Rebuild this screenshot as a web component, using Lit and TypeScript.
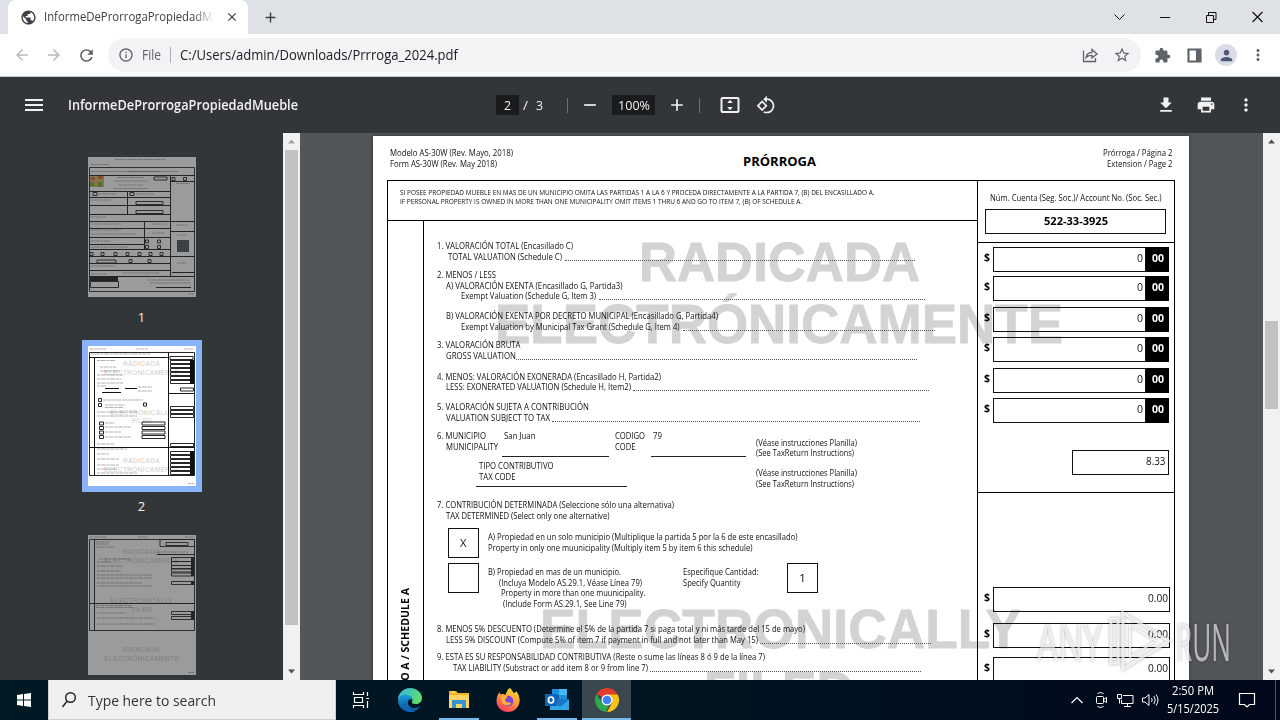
import { LitElement, css, html, svg, nothing } from "lit";
import type { TemplateResult } from "lit";
import { customElement, property } from "lit/decorators.js";
import { classMap } from "lit/directives/class-map.js";
import { styleMap } from "lit/directives/style-map.js";

// One run of text squeezed or stretched to a known width, as a PDF text layer does.
@customElement("text-run")
export class TextRun extends LitElement {
  static styles = css`
    :host {
      display: block;
      flex: none;
      white-space: pre;
    }
    span {
      display: inline-block;
      transform-origin: 0 50%;
    }
  `;

  @property({ type: String })
  text = "";

  @property({ type: Number })
  w = 0;

  protected override updated(): void {
    const span = this.renderRoot.querySelector("span");
    if (!span || !this.w) {
      return;
    }
    span.style.transform = "none";
    const natural = span.getBoundingClientRect().width;
    span.style.transform = `scaleX(${this.w / natural})`;
  }

  render() {
    return html`<div style=${styleMap({ width: `${this.w}px` })}><span>${this.text}</span></div>`;
  }
}

const run = (text: string, w: number, cls = "") =>
  html`<text-run class=${cls} .text=${text} .w=${w}></text-run>`;

const material = (d: string, size = 24) =>
  html`<svg class="icon" width=${size} height=${size} viewBox="0 0 24 24" fill="currentColor"><path d=${d}></path></svg>`;

const ICON = {
  globe: "M12 2C6.48 2 2 6.48 2 12s4.48 10 10 10 10-4.48 10-10S17.52 2 12 2zm-1 17.93c-3.95-.49-7-3.85-7-7.93 0-.62.08-1.21.21-1.79L9 15v1c0 1.1.9 2 2 2v1.93zm6.9-2.54c-.26-.81-1-1.39-1.9-1.39h-1v-3c0-.55-.45-1-1-1H8v-2h2c.55 0 1-.45 1-1V7h2c1.1 0 2-.9 2-2v-.41c2.93 1.19 5 4.06 5 7.41 0 2.08-.8 3.97-2.1 5.39z",
  close: "M19 6.41L17.59 5 12 10.59 6.41 5 5 6.41 10.59 12 5 17.59 6.41 19 12 13.41 17.59 19 19 17.59 13.41 12z",
  add: "M19 13h-6v6h-2v-6H5v-2h6V5h2v6h6v2z",
  remove: "M19 13H5v-2h14v2z",
  back: "M20 11H7.83l5.59-5.59L12 4l-8 8 8 8 1.41-1.41L7.83 13H20v-2z",
  forward: "M12 4l-1.41 1.41L16.17 11H4v2h12.17l-5.58 5.59L12 20l8-8z",
  reload: "M17.65 6.35C16.2 4.9 14.21 4 12 4c-4.42 0-7.99 3.58-7.99 8s3.57 8 7.99 8c3.73 0 6.84-2.55 7.73-6h-2.08c-.82 2.33-3.04 4-5.65 4-3.31 0-6-2.69-6-6s2.69-6 6-6c1.66 0 3.14.69 4.22 1.78L13 11h7V4l-2.35 2.35z",
  info: "M11 7h2v2h-2zm0 4h2v6h-2zm1-9C6.48 2 2 6.48 2 12s4.48 10 10 10 10-4.48 10-10S17.52 2 12 2zm0 18c-4.41 0-8-3.59-8-8s3.59-8 8-8 8 3.59 8 8-3.59 8-8 8z",
  star: "M22 9.24l-7.19-.62L12 2 9.19 8.63 2 9.24l5.46 4.73L5.82 21 12 17.27 18.18 21l-1.63-7.03L22 9.24zM12 15.4l-3.76 2.27 1-4.28-3.32-2.88 4.38-.38L12 6.1l1.71 4.04 4.38.38-3.32 2.88 1 4.28L12 15.4z",
  puzzle: "M20.5 11H19V7c0-1.1-.9-2-2-2h-4V3.5C13 2.12 11.88 1 10.5 1S8 2.12 8 3.5V5H4c-1.1 0-1.99.9-1.99 2v3.8H3.5c1.49 0 2.7 1.21 2.7 2.7s-1.21 2.7-2.7 2.7H2V20c0 1.1.9 2 2 2h3.8v-1.5c0-1.49 1.21-2.7 2.7-2.7s2.7 1.21 2.7 2.7V22H17c1.1 0 2-.9 2-2v-4h1.5c1.38 0 2.5-1.12 2.5-2.5S21.88 11 20.5 11z",
  person: "M12 12c2.21 0 4-1.79 4-4s-1.79-4-4-4-4 1.79-4 4 1.79 4 4 4zm0 2c-2.67 0-8 1.34-8 4v2h16v-2c0-2.66-5.33-4-8-4z",
  more: "M12 8c1.1 0 2-.9 2-2s-.9-2-2-2-2 .9-2 2 .9 2 2 2zm0 2c-1.1 0-2 .9-2 2s.9 2 2 2 2-.9 2-2-.9-2-2-2zm0 6c-1.1 0-2 .9-2 2s.9 2 2 2 2-.9 2-2-.9-2-2-2z",
  panel: "M2 2h20v20H2zM5 5v14h9V5z",
  menu: "M3 18h18v-2H3v2zm0-5h18v-2H3v2zm0-7v2h18V6H3z",
  rotate: "M7.34 6.41L.86 12.9l6.49 6.48 6.49-6.48-6.5-6.49zM3.69 12.9l3.66-3.66L11 12.9l-3.66 3.66-3.65-3.66zm15.67-6.26C17.61 4.88 15.3 4 13 4V.76L8.76 5 13 9.24V6c1.79 0 3.58.68 4.95 2.05 2.73 2.73 2.73 7.17 0 9.9C16.58 19.32 14.79 20 13 20c-.97 0-1.94-.21-2.84-.61l-1.49 1.49C10.02 21.62 11.51 22 13 22c2.3 0 4.61-.88 6.36-2.64 3.52-3.51 3.52-9.21 0-12.72z",
  download: "M19 9h-4V3H9v6H5l7 7 7-7zM5 18v2h14v-2H5z",
  print: "M19 8H5c-1.66 0-3 1.34-3 3v6h4v4h12v-4h4v-6c0-1.66-1.34-3-3-3zm-3 11H8v-5h8v5zm3-7c-.55 0-1-.45-1-1s.45-1 1-1 1 .45 1 1-.45 1-1 1zm-1-9H6v4h12V3z",
};

@customElement("browser-bar")
export class BrowserBar extends LitElement {
  static styles = css`
    :host {
      display: block;
      height: 77px;
      box-sizing: border-box;
      background: #fff;
      border-bottom: 1px solid #c4cacd;
      font: 12px/16px "Open Sans", "Noto Sans", sans-serif;
      color: #3c4043;
    }
    .icon {
      display: block;
      flex: none;
    }
    .strip {
      display: flex;
      height: 34px;
      background: #dee1e6;
      align-items: center;
      padding-left: 8px;
    }
    .tab {
      display: flex;
      align-items: center;
      box-sizing: border-box;
      width: 240px;
      height: 34px;
      padding: 0 9px 0 12px;
      background: #fff;
      border-radius: 8px 8px 0 0;
    }
    .caption {
      width: 170px;
      margin: 0 11px 0 7px;
      overflow: hidden;
      mask-image: linear-gradient(90deg, #000 88%, transparent);
    }
    .plus {
      margin-left: 14px;
      color: #3c4043;
    }
    .window {
      display: flex;
      align-items: center;
      gap: 30px;
      margin-left: auto;
      padding-right: 15px;
      color: #111;
    }
    .bar {
      display: flex;
      align-items: center;
      height: 42px;
      padding: 0 13px;
      color: #5f6368;
    }
    .nav {
      display: flex;
      gap: 14px;
      width: 95px;
    }
    .nav .off {
      color: #bababa;
    }
    .omni {
      display: flex;
      flex: 1;
      align-items: center;
      height: 34px;
      padding: 0 10px;
      background: #f1f3f4;
      border-radius: 17px;
      font-size: 14px;
    }
    .scheme {
      margin-left: 8px;
    }
    .rule {
      width: 1px;
      height: 16px;
      margin: 0 9px 0 9px;
      background: #a9adb1;
    }
    .url {
      color: #202124;
      margin-right: auto;
    }
    .omni .star {
      margin-left: 14px;
    }
    .actions {
      display: flex;
      align-items: center;
      gap: 12px;
      padding-left: 13px;
    }
    .puzzle {
      margin-right: 3px;
    }
    .avatar {
      display: grid;
      place-items: center;
      width: 22px;
      height: 22px;
      border-radius: 50%;
      background: #dadce8;
      color: #50587a;
    }
  `;

  render() {
    return html`
      <div class="strip">
        <div class="tab">
          ${material(ICON.globe, 17)}
          <div class="caption">${run("InformeDeProrrogaPropiedadMueble", 198)}</div>
          ${material(ICON.close, 14)}
        </div>
        <div class="plus">${material(ICON.add, 17)}</div>
        <div class="window">
          <svg class="icon" width="16" height="12" fill="none" stroke="currentColor"><path d="M3.5 3.5l5 5 5-5"></path></svg>
          <svg class="icon" width="16" height="12" fill="none" stroke="currentColor"><path d="M3 6.5h10"></path></svg>
          <svg class="icon" width="16" height="12" fill="none" stroke="currentColor"><path d="M3.5 4.5h7v7h-7zM5.5 4V1.5h7.5v7h-2"></path></svg>
          <svg class="icon" width="16" height="12" fill="none" stroke="currentColor" stroke-width="1.2"><path d="M3.5 1l10 10m0-10l-10 10"></path></svg>
        </div>
      </div>
      <div class="bar">
        <div class="nav">
          <div class="off">${material(ICON.back, 18)}</div>
          <div class="off">${material(ICON.forward, 18)}</div>
          ${material(ICON.reload, 19)}
        </div>
        <div class="omni">
          ${material(ICON.info, 16)}
          ${run("File", 19, "scheme")}
          <div class="rule"></div>
          ${run("C:/Users/admin/Downloads/Prrroga_2024.pdf", 278, "url")}
          <svg class="icon" width="18" height="18" viewBox="0 0 18 18" fill="none" stroke="currentColor" stroke-width="1.3">
            <path d="M2.5 4.5v11h12V12"></path>
            <path d="M5 11.5c.5-3.5 2.5-5 6-5.2V3.500L16 8l-5 4V9.300C8.500 9.200 6.500 9.800 5 11.500z"></path>
          </svg>
          <div class="star">${material(ICON.star, 18)}</div>
        </div>
        <div class="actions">
          <div class="puzzle">${material(ICON.puzzle, 17)}</div>
          ${material(ICON.panel, 17)}
          <div class="avatar">${material(ICON.person, 17)}</div>
          ${material(ICON.more, 18)}
        </div>
      </div>
    `;
  }
}

@customElement("viewer-toolbar")
export class ViewerToolbar extends LitElement {
  static styles = css`
    :host {
      display: flex;
      align-items: center;
      height: 56px;
      padding: 0 22px;
      background: #323639;
      color: #f1f1f1;
      font: 13.5px/20px "Open Sans", "Noto Sans", sans-serif;
    }
    .icon {
      display: block;
      flex: none;
    }
    .name {
      width: 394px;
      margin-left: 22px;
      font-weight: 600;
    }
    .center {
      display: flex;
      align-items: center;
      margin-left: 34px;
      font-size: 13px;
    }
    .field {
      display: grid;
      place-items: center;
      width: 23px;
      height: 20px;
      background: #191b1c;
    }
    .field.zoom {
      width: 43px;
      margin: 0 12px 0 12px;
    }
    .of {
      display: flex;
      width: 20px;
      gap: 8px;
      margin-left: 4px;
    }
    .rule {
      width: 1px;
      height: 15px;
      margin-left: 24px;
      background: #6d7173;
    }
    .zoom ~ .rule {
      margin-left: 12px;
    }
    .center .rule + .icon {
      margin-left: 12px;
    }
    .center .rotate {
      margin-left: 8px;
    }
    .actions {
      display: flex;
      gap: 20px;
      margin-left: auto;
      padding-right: 2px;
    }
  `;

  render() {
    return html`
      ${material(ICON.menu, 24)}
      <div class="name">${run("InformeDeProrrogaPropiedadMueble", 230)}</div>
      <div class="center">
        <div class="field">${run("2", 7)}</div>
        <div class="of">${run("/", 5)}${run("3", 7)}</div>
        <div class="rule"></div>
        ${material(ICON.remove, 20)}
        <div class="field zoom">${run("100%", 32)}</div>
        ${material(ICON.add, 20)}
        <div class="rule"></div>
        <svg class="icon" width="36" height="20" viewBox="0 0 36 20" fill="none" stroke="currentColor" stroke-width="2">
          <rect x="9.5" y="3" width="17" height="14" rx="1"></rect>
          <path d="M18 4.8l2.8 3.2h-5.6zM18 15.2l2.8-3.2h-5.6z" fill="currentColor" stroke="none"></path>
        </svg>
        <div class="rotate">${material(ICON.rotate, 20)}</div>
      </div>
      <div class="actions">
        ${material(ICON.download, 20)} ${material(ICON.print, 20)} ${material(ICON.more, 20)}
      </div>
    `;
  }
}

@customElement("scroll-track")
export class ScrollTrack extends LitElement {
  static styles = css`
    :host {
      display: flex;
      flex-direction: column;
      flex: none;
      width: 17px;
      background: #f1f1f1;
    }
    svg {
      display: block;
      flex: none;
    }
    .travel {
      flex: 1;
    }
    .thumb {
      margin: 0 2px;
      background: #c1c1c1;
    }
  `;

  @property({ type: Number })
  offset = 0;

  @property({ type: Number })
  size = 0;

  @property({ type: Boolean })
  atTop = false;

  render() {
    return html`
      <svg width="17" height="17"><path d="M5 10.5h7l-3.5-4z" fill=${this.atTop ? "#a3a3a3" : "#505050"}></path></svg>
      <div class="travel">
        <div style=${styleMap({ height: `${this.offset}px` })}></div>
        <div class="thumb" style=${styleMap({ height: `${this.size}px` })}></div>
      </div>
      <svg width="17" height="17"><path d="M5 6.5h7l-3.5 4z" fill="#505050"></path></svg>
    `;
  }
}

type Rect = [number, number, number, number];

// A frame with no width or no height comes out as a plain rule.
const frames = (rects: Rect[]) =>
  rects.map(([x, y, w, h]) => svg`<path d=${`M${x} ${y}h${w}v${h}h${-w}z`} fill="none" stroke="#111" stroke-width=".9"></path>`);

const scribbles = (rects: [number, number, number][]) =>
  rects.map(([x, y, w]) => svg`<path d=${`M${x} ${y}h${w}`} stroke="#222" stroke-width=".7" stroke-dasharray="3 .6 5 .8" opacity=".5"></path>`);

const stamp = (text: string, x: number, y: number, w: number) =>
  svg`<text x=${x} y=${y} textLength=${w} lengthAdjust="spacingAndGlyphs" font-size="7.5" font-weight="700" fill="#000" fill-opacity=".17">${text}</text>`;

const filled = (x: number, y: number, w: number, h: number) =>
  svg`<rect x=${x} y=${y} width=${w} height=${h} fill="#111"></rect>`;

const pageOne = svg`
  ${frames([
    [1.5, 10.5, 105, 124], [1.5, 18.5, 105, 0], [82.5, 18.5, 0, 101], [82.5, 24.5, 24, 0],
    [82.5, 64.5, 24, 0], [82.5, 74.5, 24, 0], [82.5, 99.5, 24, 0], [1.5, 34.5, 81, 0], [1.5, 40.5, 81, 0],
    [1.5, 48.5, 81, 0], [1.5, 57.5, 81, 0], [1.5, 64.5, 81, 0], [1.5, 71.5, 81, 0], [1.5, 80.5, 81, 0],
    [1.5, 87.5, 55, 0], [1.5, 92.5, 81, 0], [1.5, 99.5, 81, 0], [1.5, 106.5, 81, 0], [1.5, 113.5, 81, 0],
    [1.5, 119.5, 105, 0], [39.5, 34.5, 0, 23], [56.5, 64.5, 0, 28], [48, 44.5, 27, 3], [48, 53.5, 27, 3],
    [9, 103, 19, 3], [66, 20, 13, 3], [2.5, 124.5, 28, 6],
    [5, 35.5, 4, 3], [42, 35.5, 4, 3], [84, 20.5, 3, 3], [95.5, 20.5, 3, 3],
    [57.5, 83, 3, 3], [69.5, 83, 3, 3], [57.5, 88.5, 3, 3], [69.5, 88.5, 3, 3],
    [2, 95.5, 3, 3], [13, 95.5, 3, 3], [26, 95.5, 3, 3], [38, 95.5, 3, 3], [50, 95.5, 3, 3], [61, 95.5, 3, 3], [72, 95.5, 3, 3],
    [41, 102.5, 3, 3], [60, 102.5, 3, 3],
  ])}
  ${filled(2, 120, 28, 4)}${filled(68, 130, 35, 1)}${filled(84, 115, 22, 1)}
  <rect x="2" y="19" width="14" height="11" fill="#d9b24a"></rect>
  <path d="M3 20h4v3h-4zM10 19h5v3h-5z" fill="#e0603a"></path>
  <path d="M2 25h4v4h-4zM10 25h4v5h-4z" fill="#6fae3c"></path>
  <rect x="89" y="83" width="12" height="12" fill="#3f4345"></rect>
  <path d="M90 85h10M90 88h10M90 91h10M90 94h10" stroke="#888" stroke-dasharray="1 1.3"></path>
  ${scribbles([[27, 2.5, 50], [3, 7.5, 18], [3, 14.5, 70], [40, 14.5, 50], [29, 20.5, 27], [26, 24, 34], [31, 28, 24], [26, 31.5, 34], [10, 37, 18], [48, 37, 18], [3, 43, 20], [3, 60, 15], [3, 67, 30], [64, 67, 14], [3, 73, 30], [3, 77, 45], [3, 84, 20], [64, 76, 12], [3, 90, 38], [3, 109, 24], [35, 116, 36], [3, 117, 15], [60, 123, 42], [62, 126, 40], [88, 68, 12], [89, 78, 10], [89, 106, 10], [88, 26.5, 14], [100, 137, 6]])}
`;

const pageTwo = svg`
  ${stamp("RADICADA", 35, 20, 37)}${stamp("ELECTRÓNICAMENTE", 16, 28.5, 75)}
  ${stamp("ELECTRONICALLY", 22, 69, 63)}${stamp("FILED", 44, 77, 20)}
  ${stamp("RADICADA", 35, 117, 37)}${stamp("ELECTRÓNICAMENTE", 16, 126, 75)}
  ${frames([
    [1.5, 6.5, 105, 123], [1.5, 11.5, 78, 0], [6.5, 11.5, 0, 118], [80.5, 6.5, 0, 123],
    [1.5, 101.5, 105, 0], [80.5, 47.5, 26, 0], [82, 10.5, 23, 3],
    [82.5, 14.5, 23, 3], [82.5, 18.5, 23, 3], [82.5, 22.5, 23, 3], [82.5, 26.5, 23, 3], [82.5, 30.5, 23, 3], [82.5, 34.5, 23, 3],
    [92.5, 42, 13, 3], [82.5, 60.5, 23, 3], [82.5, 64.5, 23, 3], [82.5, 68.5, 23, 3], [82.5, 97.5, 23, 3],
    [10.5, 52.5, 3, 3], [10.5, 57.5, 3, 3], [55.5, 57, 3, 3],
    [11.5, 76, 4, 3], [11.5, 80.5, 4, 3], [11.5, 85, 4, 3], [11.5, 89.5, 4, 3],
    [54, 76, 23, 3], [54, 80.5, 23, 3], [54, 85, 23, 3], [54, 89.5, 23, 3],
    [82.5, 105.5, 23, 3], [82.5, 109.5, 23, 3], [82.5, 113.5, 23, 3], [82.5, 117.5, 23, 3], [82.5, 121.5, 23, 3], [82.5, 125.5, 23, 3],
  ])}
  ${filled(102, 14, 4, 24)}${filled(102, 105, 4, 24)}
  ${filled(17, 42, 14, 1)}${filled(37, 42, 12, 1)}${filled(14, 46, 19, 1)}
  ${scribbles([[2, 3, 16], [48, 3, 12], [96, 3, 10], [3, 8, 60], [9, 14.5, 18], [12, 21, 16], [12, 25, 20], [9, 29, 26], [9, 33, 24], [9, 37, 26], [9, 40, 10], [50, 41, 14], [50, 45, 14], [15, 54, 40], [17, 59, 20], [17, 61.5, 18], [9, 66, 40], [9, 70, 40], [17, 77, 10], [17, 81, 26], [17, 86, 16], [17, 91, 26], [9, 98, 17], [9, 103, 30], [9, 108, 12], [9, 113, 22], [9, 119, 22], [9, 123, 20], [9, 127, 40], [100, 137.5, 6]])}
`;

const pageThree = svg`
  ${stamp("RADICADA", 35, 19, 37)}${stamp("ELECTRÓNICAMENTE", 16, 27.5, 75)}
  ${stamp("ELECTRONICALLY", 22, 68, 63)}${stamp("FILED", 44, 77, 20)}
  ${stamp("RADICADA", 35, 117, 37)}${stamp("ELECTRÓNICAMENTE", 16, 125.5, 75)}
  ${frames([
    [1.5, 4.5, 105, 91], [6.5, 4.5, 0, 91], [1.5, 68.5, 105, 0], [72, 4.5, 34.5, 7], [78, 7.5, 22, 3],
    [83.5, 22.5, 22, 4], [83.5, 26.5, 22, 4], [83.5, 30.5, 22, 3], [83.5, 34, 22, 3], [83.5, 38, 22, 3],
    [83.5, 46.5, 22, 3], [83.5, 76.5, 22, 3], [83.5, 81.5, 22, 3],
  ])}
  ${filled(103, 22, 3, 19)}${filled(103, 46, 3, 4)}${filled(103, 76, 3, 9)}${filled(69, 19, 37, 1)}
  ${scribbles([[2, 2, 16], [50, 2, 10], [97, 2, 9], [8, 7, 14], [8, 9, 13], [8, 12, 18], [11, 24, 32], [9, 27, 14], [9, 31, 26], [9, 36, 24], [9, 40, 55], [9, 43, 55], [9, 48, 45], [9, 51, 55], [8, 70.5, 36], [8, 72.5, 38], [9, 78, 30], [9, 83, 58], [9, 89, 58], [70, 17, 30], [100, 137.5, 6]])}
`;

@customElement("thumb-rail")
export class ThumbRail extends LitElement {
  static styles = css`
    :host {
      display: flex;
      flex-direction: column;
      align-items: center;
      box-sizing: border-box;
      flex: none;
      width: 283px;
      padding-top: 18px;
      background: #323639;
      color: #f1f1f1;
      font: 13px/18px "Open Sans", "Noto Sans", sans-serif;
      overflow: hidden;
    }
    .entry {
      display: flex;
      flex-direction: column;
      align-items: center;
      flex: none;
      height: 189px;
    }
    .sheet {
      padding: 6px;
    }
    .sheet svg {
      display: block;
      background: #fff;
      font-family: "Liberation Sans", sans-serif;
      opacity: 0.5;
    }
    .sheet.current {
      background: #8ab4f8;
    }
    .sheet.current svg {
      opacity: 1;
    }
    .number {
      margin-top: 5px;
    }
  `;

  render() {
    return html`${[pageOne, pageTwo, pageThree].map(
      (page, i) => html`
        <div class="entry">
          <div class=${classMap({ sheet: true, current: i === 1 })}>
            <svg width="108" height="140" viewBox="0 0 108 140">${page}</svg>
          </div>
          ${i < 2 ? html`<div class="number">${i + 1}</div>` : nothing}
        </div>
      `,
    )}`;
  }
}

interface FormLine {
  step: number;
  indent: number;
  width: number;
  text: string;
  leader?: number;
  gap?: number;
}

const VALUATION: FormLine[] = [
  { step: 31, indent: 0, width: 136, text: "1. VALORACIÓN TOTAL (Encasillado C)" },
  { step: 11, indent: 11, width: 114, text: "TOTAL VALUATION (Schedule C)", gap: 3, leader: 350 },
  { step: 18, indent: 0, width: 59, text: "2. MENOS / LESS" },
  { step: 11, indent: 8.5, width: 176.5, text: "A) VALORACIÓN EXENTA (Encasillado G, Partida3)" },
  { step: 10, indent: 24, width: 135, text: "Exempt Valuation (Schedule G, Item 3)", gap: 3, leader: 326 },
  { step: 20, indent: 8.5, width: 272, text: "B) VALORACIÓN EXENTA POR DECRETO MUNICIPAL (Encasillado G, Partida4)" },
  { step: 11, indent: 24, width: 218.5, text: "Exempt Valuation by Municipal Tax Grant (Schedule G, Item 4)", gap: 3, leader: 252 },
  { step: 18, indent: 0, width: 83.5, text: "3. VALORACIÓN BRUTA" },
  { step: 11, indent: 9, width: 70, text: "GROSS VALUATION", gap: 0, leader: 401 },
  { step: 21, indent: 0, width: 224, text: "4. MENOS: VALORACIÓN EXONERADA (Encasillado H, Partida2)" },
  { step: 10, indent: 9, width: 185, text: "LESS: EXONERATED VALUATION (Schedule H, Item2)", gap: 2, leader: 296 },
  { step: 20, indent: 0, width: 152, text: "5. VALORACIÓN SUJETA A CONTRIBUCIÓN" },
  { step: 11, indent: 9, width: 104, text: "VALUATION SUBJECT TO TAX", gap: 2, leader: 368 },
];

const DETERMINED: FormLine[] = [
  { step: 17, indent: 0, width: 237, text: "7. CONTRIBUCIÓN DETERMINADA (Seleccione sólo una alternativa)" },
  { step: 11, indent: 9, width: 163.5, text: "TAX DETERMINED (Select only one alternative)" },
];

const LIABILITY: FormLine[] = [
  { step: 25, indent: 0, width: 368, text: "8. MENOS 5% DESCUENTO (Determine el 5% de la partida 7 si paga total y ni más tarde del 15 de mayo)" },
  { step: 11, indent: 9, width: 312, text: "LESS 5% DISCOUNT (Compute 5% of item 7 if payment in full and not later than May 15)", gap: 2, leader: 171 },
  { step: 17, indent: 0, width: 328, text: "9. ESTA ES SU RESPONSABILIDAD CONTRIBUTIVA (Reste o sume las líneas 8 ó 9 de la línea 7)" },
  { step: 11, indent: 15.5, width: 195, text: "TAX LIABILITY (Substract or add item 8 or 9 from line 7)", gap: 2, leader: 271 },
];

const formLine = (l: FormLine) => html`
  <div class="line" style=${styleMap({ height: `${l.step}px`, paddingLeft: `${l.indent}px` })}>
    ${run(l.text, l.width)}
    ${l.leader
      ? html`<i class="leader" style=${styleMap({ width: `${l.leader}px`, marginLeft: `${l.gap ?? 0}px` })}></i>`
      : nothing}
  </div>
`;

interface Amount {
  above: number;
  value: string;
  width: number;
  cents?: string;
}

// Gap above each amount box and its value; cents sit in a black cell.
const AMOUNTS: Amount[] = [
  { above: 4, value: "0", width: 6, cents: "00" },
  { above: 4, value: "0", width: 6, cents: "00" },
  { above: 6, value: "0", width: 6, cents: "00" },
  { above: 5, value: "0", width: 6, cents: "00" },
  { above: 6, value: "0", width: 6, cents: "00" },
  { above: 5, value: "0", width: 6, cents: "00" },
];

const TOTALS: Amount[] = [
  { above: 94, value: "0.00", width: 20 },
  { above: 11, value: "0.00", width: 20 },
  { above: 9, value: "0.00", width: 20 },
];

@customElement("form-page")
export class FormPage extends LitElement {
  static styles = css`
    :host {
      display: block;
      position: relative;
      box-sizing: border-box;
      width: 816px;
      height: 1056px;
      background: #fff;
      color: #111;
      font: 8.6px/11px "Open Sans", "Noto Sans", sans-serif;
    }
    .stamp {
      position: absolute;
      left: 0;
      color: #d3d3d3;
      font: 700 56px/56px "Liberation Sans", Arial, sans-serif;
      -webkit-text-stroke: 0.8px #d3d3d3;
    }
    .s1 {
      left: 266px;
      top: 98px;
    }
    .s2 {
      left: 122px;
      top: 160px;
    }
    .s3 {
      left: 167px;
      top: 465px;
    }
    .s4 {
      left: 331px;
      top: 527px;
    }
    .head {
      position: relative;
      display: flex;
      justify-content: space-between;
      box-sizing: border-box;
      height: 44px;
      padding: 12px 17px 0 17px;
    }
    .head .title {
      margin: 4px 0 0 -3px;
      font-size: 13px;
      line-height: 18px;
      font-weight: 700;
      color: #000;
    }
    .right {
      display: flex;
      flex-direction: column;
      align-items: flex-end;
      width: 123px;
    }
    .frame {
      position: relative;
      display: flex;
      box-sizing: border-box;
      width: 788px;
      height: 850px;
      margin-left: 14px;
      border: 1px solid #000;
    }
    .main {
      width: 589px;
    }
    .note {
      box-sizing: border-box;
      height: 40px;
      padding: 7px 0 0 11.5px;
      border-bottom: 1px solid #000;
      font-size: 7.4px;
      line-height: 9px;
    }
    .body {
      display: flex;
      height: 100%;
    }
    .spine {
      box-sizing: border-box;
      flex: none;
      width: 36px;
      padding: 367px 0 0 10px;
      border-right: 1px solid #000;
    }
    .spine span {
      display: block;
      writing-mode: vertical-rl;
      transform: rotate(180deg);
      color: #000;
      font-size: 10.6px;
      line-height: 15px;
      font-weight: 700;
      white-space: nowrap;
    }
    .items {
      padding-left: 13px;
      line-height: 9px;
    }
    .items text-run {
      padding: 1px 0;
    }
    .line {
      display: flex;
      align-items: flex-end;
      box-sizing: border-box;
    }
    .leader {
      flex: none;
      height: 0;
      margin-bottom: 2px;
      border-bottom: 1px dotted #555;
    }
    .place {
      display: flex;
      height: 70px;
    }
    .town {
      width: 178px;
      padding-top: 7px;
    }
    .pair {
      display: flex;
      gap: 18px;
    }
    .second {
      margin-left: 9px;
    }
    .blank {
      height: 1px;
      margin: 3px 0 0 65px;
      width: 107px;
      background: #222;
    }
    .kind {
      margin: 4px 0 0 41.5px;
    }
    .blank.kindline {
      margin: 3px 0 0 39px;
      width: 151px;
    }
    .code {
      width: 140.5px;
      padding-top: 7px;
    }
    .code .pair {
      gap: 8px;
    }
    .code .blank {
      width: 95px;
      margin: 3px 0 0 36px;
    }
    .see {
      padding-top: 14px;
      line-height: 10px;
    }
    .see text-run {
      padding: 0;
    }
    .see .again {
      margin-top: 10px;
    }
    .see .again text-run {
      padding-bottom: 1px;
    }
    .choice {
      display: flex;
      margin: 6px 0 0 11px;
    }
    .choice + .choice {
      margin-top: 5px;
      height: 47px;
    }
    .check {
      display: flex;
      align-items: center;
      justify-content: center;
      box-sizing: border-box;
      flex: none;
      width: 31px;
      height: 30px;
      border: 1px solid #111;
      font-size: 11px;
      line-height: 14px;
    }
    .items .check text-run {
      padding: 0;
    }
    .option {
      padding: 4px 0 0 9px;
    }
    .option .in1 {
      margin-left: 11px;
    }
    .option .in2 {
      margin: -1px 0 0 13px;
    }
    .option .in3 {
      margin-left: 15px;
    }
    .quantity {
      padding: 4px 28.5px 0 37.5px;
    }
    .side {
      flex: 1;
      border-left: 1px solid #000;
      font-size: 11px;
    }
    .account {
      box-sizing: border-box;
      height: 62px;
      padding: 11px 0 0 7px;
      border-bottom: 1px solid #000;
      font-size: 9.4px;
      line-height: 11px;
    }
    .account .label {
      margin-left: 4.5px;
    }
    .number {
      display: grid;
      place-items: center;
      box-sizing: border-box;
      width: 181px;
      height: 25px;
      margin-top: 6px;
      padding-bottom: 3px;
      border: 1px solid #111;
      color: #000;
      font-size: 11px;
      font-weight: 700;
    }
    .amount {
      display: flex;
      width: 191px;
      height: 25px;
    }
    .dollar {
      box-sizing: border-box;
      width: 15px;
      padding: 4px 0 0 6px;
      color: #000;
      font-weight: 700;
    }
    .value {
      display: flex;
      flex: 1;
      justify-content: flex-end;
      box-sizing: border-box;
      border: 1px solid #111;
      padding: 4px 2px 0 0;
    }
    .cents {
      box-sizing: border-box;
      width: 23px;
      padding: 5px 0 0 5.5px;
      background: #000;
      color: #fff;
      font-weight: 700;
    }
    .amount:not(.coins) {
      width: 192px;
    }
    .amount:not(.coins) .value {
      padding-right: 1px;
    }
    .rate {
      display: flex;
      justify-content: flex-end;
      box-sizing: border-box;
      width: 97px;
      height: 25px;
      margin: 27px 0 17px 94px;
      padding: 4px 3px 0 0;
      border: 1px solid #111;
    }
    .split {
      height: 1px;
      background: #000;
    }
  `;

  private amount(a: Amount): TemplateResult {
    return html`
      <div class=${classMap({ amount: true, coins: !!a.cents })} style=${styleMap({ marginTop: `${a.above}px` })}>
        <div class="dollar">${run("$", 6)}</div>
        <div class="value">${run(a.value, a.width)}</div>
        ${a.cents ? html`<div class="cents">${run(a.cents, 12)}</div>` : nothing}
      </div>
    `;
  }

  render() {
    return html`
      ${run("RADICADA", 281, "stamp s1")} ${run("ELECTRÓNICAMENTE", 568, "stamp s2")}
      ${run("ELECTRONICALLY", 481, "stamp s3")} ${run("FILED", 150, "stamp s4")}
      <div class="head">
        <div>${run("Modelo AS-30W (Rev. Mayo, 2018)", 123)}${run("Form AS-30W (Rev. May 2018)", 107)}</div>
        ${run("PRÓRROGA", 73, "title")}
        <div class="right">${run("Prórroga / Página 2", 69.5)}${run("Extension / Page 2", 65.5)}</div>
      </div>
      <div class="frame">
        <div class="main">
          <div class="note">
            ${run("SI POSEE PROPIEDAD MUEBLE EN MAS DE UN MUNICIPIO OMITA LAS PARTIDAS 1 A LA 6 Y PROCEDA DIRECTAMENTE A LA PARTIDA 7, (B) DEL ENCASILLADO A.", 474.5)}
            ${run("IF PERSONAL PROPERTY IS OWNED IN MORE THAN ONE MUNICIPALITY OMIT ITEMS 1 THRU 6 AND GO TO ITEM 7, (B) OF SCHEDULE A.", 402)}
          </div>
          <div class="body">
            <div class="spine"><span>ENCASILLADO A / SCHEDULE A</span></div>
            <div class="items">
              ${VALUATION.map(formLine)}
              <div class="place">
                <div class="town">
                  <div class="pair">${run("6. MUNICIPIO", 49)}${run("San Juan", 31.5)}</div>
                  ${run("MUNICIPALITY", 52, "second")}
                  <div class="blank"></div>
                  <div class="kind">${run("TIPO CONTRIBUTIVO", 74.5)}${run("TAX CODE", 36.5)}</div>
                  <div class="blank kindline"></div>
                </div>
                <div class="code">
                  <div class="pair">${run("CODIGO", 30)}${run("79", 9)}</div>
                  ${run("CODE", 20.5)}
                  <div class="blank"></div>
                </div>
                <div class="see">
                  ${run("(Véase instrucciones Planilla)", 101)}${run("(See TaxReturn Instructions)", 98)}
                  <div class="again">${run("(Véase instrucciones Planilla)", 101)}${run("(See TaxReturn Instructions)", 98)}</div>
                </div>
              </div>
              ${DETERMINED.map(formLine)}
              <div class="choice">
                <div class="check">${run("X", 6.5)}</div>
                <div class="option">
                  ${run("A) Propiedad en un solo municipio (Multiplique la partida 5 por la 6 de este encasillado)", 309.5)}
                  ${run("Property in only one muunicipality (Multiply item 5 by item 6 this schedule)", 264.5)}
                </div>
              </div>
              <div class="choice">
                <div class="check"></div>
                <div class="option">
                  ${run("B) Propiedad en mas de un municipio.", 133)}
                  ${run("(Incluya Modelo AS.29.1, Véase Línea 79)", 143, "in1")}
                  ${run("Property in more than one muunicipality.", 144.5, "in2")}
                  ${run("(Include Form AS.29.1, See Line 79)", 123.5, "in3")}
                </div>
                <div class="quantity">${run("Especifique Cantidad:", 75.5)}${run("Specify Quantity", 57.5)}</div>
                <div class="check">${run("1", 7)}</div>
              </div>
              ${LIABILITY.map(formLine)}
            </div>
          </div>
        </div>
        <div class="side">
          <div class="account">
            ${run("Núm. Cuenta (Seg. Soc.)/ Account No. (Soc. Sec.)", 171.5, "label")}
            <div class="number">${run("522-33-3925", 64)}</div>
          </div>
          ${AMOUNTS.map((a) => this.amount(a))}
          <div class="rate">${run("8.33", 19.5)}</div>
          <div class="split"></div>
          ${TOTALS.map((a) => this.amount(a))}
        </div>
      </div>
    `;
  }
}

@customElement("task-bar")
export class TaskBar extends LitElement {
  static styles = css`
    :host {
      display: flex;
      align-items: center;
      height: 40px;
      background: linear-gradient(90deg, #001a25, #001420 55%, #00081a);
      color: #fff;
      font: 12px/18px "Open Sans", "Noto Sans", sans-serif;
    }
    svg {
      display: block;
      flex: none;
    }
    .start {
      display: grid;
      place-items: center;
      width: 48px;
    }
    .search {
      display: flex;
      align-items: center;
      box-sizing: border-box;
      width: 288px;
      height: 40px;
      padding-left: 12px;
      background: #f0f0f0;
      border: 1px solid #cfcfcf;
      border-top-width: 0;
      color: #333;
      font-size: 15px;
    }
    .search text-run {
      margin-left: 11px;
    }
    .apps {
      display: flex;
    }
    .app {
      display: grid;
      place-items: center;
      box-sizing: border-box;
      width: 49px;
      height: 40px;
    }
    .app.active {
      margin-left: 1px;
      background: #39474f;
      border-bottom: 2px solid #76b9ed;
      padding-top: 2px;
    }
    .app.open {
      background: linear-gradient(#76b9ed, #76b9ed) 50% 100% / 40px 2px no-repeat;
    }
    .tray {
      display: flex;
      align-items: center;
      gap: 8px;
      margin-left: auto;
    }
    .clock {
      display: flex;
      flex-direction: column;
      align-items: center;
      width: 54px;
      margin: 0 1px 0 -1px;
    }
    .peek {
      width: 4px;
      height: 40px;
      margin-left: 4px;
      border-left: 1px solid #4d5560;
    }
  `;

  render() {
    return html`
      <div class="start">
        <svg width="14" height="14" fill="#fff"><path d="M0 2l6-.9v5.5H0zM7 1l7-1v6.6H7zM0 7.5h6V13l-6-.9zM7 7.5h7V14l-7-1z"></path></svg>
      </div>
      <div class="search">
        <svg width="16" height="18" fill="none" stroke="#222" stroke-width="1.4"><circle cx="9.5" cy="6.5" r="4.8"></circle><path d="M6.2 10L1.5 16"></path></svg>
        ${run("Type here to search", 128)}
      </div>
      <div class="apps">
        <div class="app">
          <svg width="18" height="16" fill="none" stroke="#fff" stroke-width="1.2"><path d="M1.5 0v2.5h10V0M1.5 16v-2.5h10V16M2.5 5.5h8v5h-8zM15.5 0v4M15.5 9v7M14 6.5h3"></path></svg>
        </div>
        <div class="app">
          <svg width="26" height="26" viewBox="0 0 26 26">
            <defs>
              <linearGradient id="e1" x1="0" y1="0" x2="1" y2=".5"><stop offset="0" stop-color="#2fb6e8"></stop><stop offset="1" stop-color="#5fdc70"></stop></linearGradient>
              <linearGradient id="e2" x1="0" y1="0" x2="0" y2="1"><stop offset="0" stop-color="#1aa0dd"></stop><stop offset="1" stop-color="#0c4f9e"></stop></linearGradient>
            </defs>
            <path d="M1 13C1 6 6.5 1 13 1s12 4.5 12 10c0 4-3 6-6.5 6-3 0-4-1-3.5-2 1.5-3-.5-6-4.5-6S3 10 1 13z" fill="url(#e1)"></path>
            <path d="M1 13c1-4 5-6 8.5-5.5C13 8 15 10.5 15 13c-1-1-2.5-1-3.5 0-2.5 4 2 9 7 8 2-.3 3.5-1.3 4.5-2-2 4-6 6-10 6C6 25 1 19.5 1 13z" fill="url(#e2)"></path>
            <path d="M9 12.5C7 18 11 24 18 24c-2 1-3.5 1.2-5 1C7 24 5.5 15 9 12.5z" fill="#0f66b8"></path>
          </svg>
        </div>
        <div class="app open">
          <svg width="22" height="20"><path d="M1 1h7l2 2h11v15H1z" fill="#f0b429"></path><path d="M1 5h20v13H1z" fill="#ffd666"></path><path d="M4 18v-8h14v8h-4v-4H8v4z" fill="#3a93cf"></path><path d="M3 2h4" stroke="#fff2c0"></path></svg>
        </div>
        <div class="app">
          <svg width="24" height="26" viewBox="0 0 24 26">
            <defs><linearGradient id="f1" x1=".8" y1="0" x2=".3" y2="1"><stop offset="0" stop-color="#ffe226"></stop><stop offset=".5" stop-color="#ff9640"></stop><stop offset="1" stop-color="#f8375f"></stop></linearGradient></defs>
            <path d="M14 1c2 2 3 3.5 3.500 5C19 6 20 5 20 4c3 3.500 4 7.500 3.500 11C22.500 21 18 25 12 25S.5 20.500.5 14c0-4 1.500-7 3-9 .2 1.500.7 2 1.500 2.500 2-.8 3-.5 4.500.2C10.500 5 11.500 2 14 1z" fill="url(#f1)"></path>
            <circle cx="12" cy="14" r="5.3" fill="#7b45d6"></circle>
            <path d="M5 8c2 1 4 .8 6 1.500 1 .7 0 2-2 2.500 0 2.500 2 4 4.500 3.500 1.500-.3 2 .8 1 1.800C11 19.500 6 18 5.500 13.500z" fill="#ffb03a"></path>
          </svg>
        </div>
        <div class="app open">
          <svg width="26" height="24"><path d="M8 1h15v11H8z" fill="#1b8fe0"></path><path d="M15 1h8v6h-8z" fill="#44b8f2"></path><path d="M8 7h7v6H8z" fill="#0f5fa8"></path><path d="M6 11h19v11H6z" fill="#1778c9"></path><path d="M6 12l10 7 9-7v10H6z" fill="#32a7e8"></path><path d="M1 6h12v12H1z" fill="#0a63b5"></path><ellipse cx="7" cy="12" rx="2.6" ry="3" fill="none" stroke="#fff" stroke-width="1.7"></ellipse></svg>
        </div>
        <div class="app active">
          <svg width="24" height="24" viewBox="0 0 24 24">
            <path d="M12 12L1.6 6A12 12 0 0 1 22.4 6z" fill="#e33b2e"></path>
            <path d="M12 12V6h10.4z" fill="#e33b2e"></path>
            <path d="M12 6.5h10.7A12 12 0 0 1 12 24l5-9z" fill="#fbc116"></path>
            <path d="M1.6 6L7 15l5 3 2 -.5L11 24A12 12 0 0 1 1.6 6z" fill="#2da94f"></path>
            <circle cx="12" cy="12" r="5.6" fill="#fff"></circle><circle cx="12" cy="12" r="4.3" fill="#3f83f1"></circle>
          </svg>
        </div>
      </div>
      <div class="tray">
        <svg width="16" height="16" fill="none" stroke="#fff" stroke-width="1.2"><path d="M2.5 11L8 5.5 13.5 11"></path></svg>
        <svg width="16" height="18" fill="none" stroke="#fff"><rect x="3.5" y="5.5" width="7" height="7" rx="1"></rect><path d="M10.5 8.5l3-2v5l-3-2M4.5 2.5q3-2 6 0M4.5 15.5q3 2 6 0"></path></svg>
        <svg width="17" height="16" fill="none" stroke="#fff"><path d="M6 3.5h10v8H4.5V8M10.5 11.5v3M7 14.5h7M.5 2.5h4v4h-4zM2.5 6.5v5"></path></svg>
        <svg width="17" height="16" fill="none" stroke="#fff"><path d="M.5 6v4h2.5l4 3.5v-11L3 6zM9.5 6q1.5 2 0 4M11.8 4q3 4 0 8M14 2.5q4 5.5 0 11"></path></svg>
        <div class="clock">${run("2:50 PM", 42)}${run("5/15/2025", 52)}</div>
        <svg width="34" height="18" fill="none" stroke="#fff" stroke-width="1.2"><path d="M10.5 2.5h15v11h-5l-2.5 2.5-2.5-2.5h-5z"></path></svg>
        <div class="peek"></div>
      </div>
    `;
  }
}

@customElement("app-root")
export class AppRoot extends LitElement {
  static styles = css`
    :host {
      display: flex;
      flex-direction: column;
      position: relative;
      width: 1280px;
      height: 720px;
      overflow: hidden;
    }
    browser-bar,
    viewer-toolbar,
    task-bar {
      flex: none;
    }
    .viewer {
      display: flex;
      flex: 1;
      min-height: 0;
    }
    .canvas {
      flex: 1;
      box-sizing: border-box;
      padding: 3px 0 0 73px;
      background: #525659;
      overflow: hidden;
    }
    form-page {
      box-shadow: 0 0 4px rgba(0, 0, 0, 0.45);
    }
    .brand {
      position: absolute;
      left: 1037px;
      top: 608px;
      display: flex;
      align-items: center;
      height: 66px;
      color: rgba(255, 255, 255, 0.6);
      font: 51px/66px "Open Sans", "Noto Sans", sans-serif;
      filter: drop-shadow(0 0 1.5px rgba(0, 0, 0, 0.45));
    }
    .brand svg {
      display: block;
      margin: 0 2px 0 6px;
    }
  `;

  render() {
    return html`
      <browser-bar></browser-bar>
      <viewer-toolbar></viewer-toolbar>
      <div class="viewer">
        <thumb-rail></thumb-rail>
        <scroll-track .offset=${0} .size=${475} .atTop=${true}></scroll-track>
        <div class="canvas"><form-page></form-page></div>
        <scroll-track .offset=${171} .size=${88}></scroll-track>
      </div>
      <task-bar></task-bar>
      <div class="brand">
        ${run("ANY", 65)}
        <svg width="66" height="64" fill="none" stroke="rgba(255,255,255,.7)" stroke-width="3">
          <path d="M3 10h7v44H3zM15 4l46 28-46 28z"></path>
          <path d="M22 16l26 16-26 16z" stroke-width="2"></path>
        </svg>
        ${run("RUN", 55)}
      </div>
    `;
  }
}

declare global {
  interface HTMLElementTagNameMap {
    "app-root": AppRoot;
    "text-run": TextRun;
  }
}
